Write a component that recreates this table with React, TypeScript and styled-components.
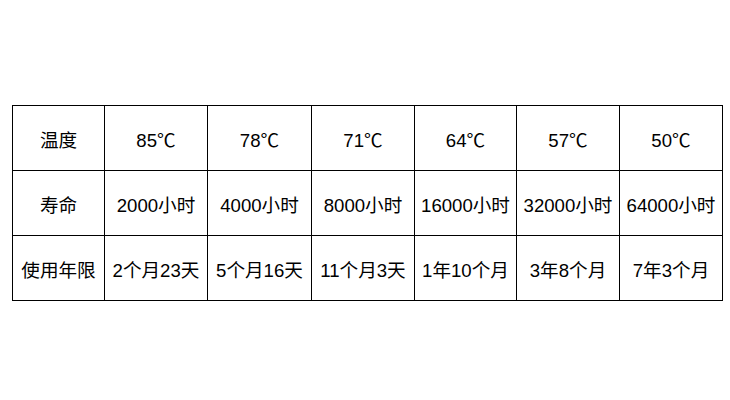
import React from "react";
import styled, { createGlobalStyle } from "styled-components";

const Global = createGlobalStyle`
  html, body { margin: 0; padding: 0; background: #fff; }
  body { font-family: "Liberation Sans", "Noto Sans CJK SC", sans-serif; }
`;

const Page = styled.div`
  width: 730px;
  height: 400px;
  padding: 105px 0 0 12px;
  box-sizing: border-box;
`;

const Table = styled.table`
  border-collapse: collapse;
  table-layout: fixed;
  width: 711px;
`;

const Cell = styled.td`
  border: 1px solid #000;
  height: 64px;
  padding: 0;
  text-align: center;
  vertical-align: middle;
  font-size: 18.6px;
  color: #000;
  white-space: nowrap;
  font-family: "Liberation Sans", "Noto Sans CJK SC", sans-serif;
`;

const widths = [92, 103, 104, 103, 102, 103, 103];

const rows: string[][] = [
  ["温度", "85℃", "78℃", "71℃", "64℃", "57℃", "50℃"],
  ["寿命", "2000小时", "4000小时", "8000小时", "16000小时", "32000小时", "64000小时"],
  ["使用年限", "2个月23天", "5个月16天", "11个月3天", "1年10个月", "3年8个月", "7年3个月"],
];

export default function App() {
  return (
    <>
      <Global />
      <Page>
        <Table>
          <colgroup>
            {widths.map((w, i) => (
              <col key={i} style={{ width: w }} />
            ))}
          </colgroup>
          <tbody>
            {rows.map((r, i) => (
              <tr key={i}>
                {r.map((c, j) => (
                  <Cell key={j}>{c}</Cell>
                ))}
              </tr>
            ))}
          </tbody>
        </Table>
      </Page>
    </>
  );
}
